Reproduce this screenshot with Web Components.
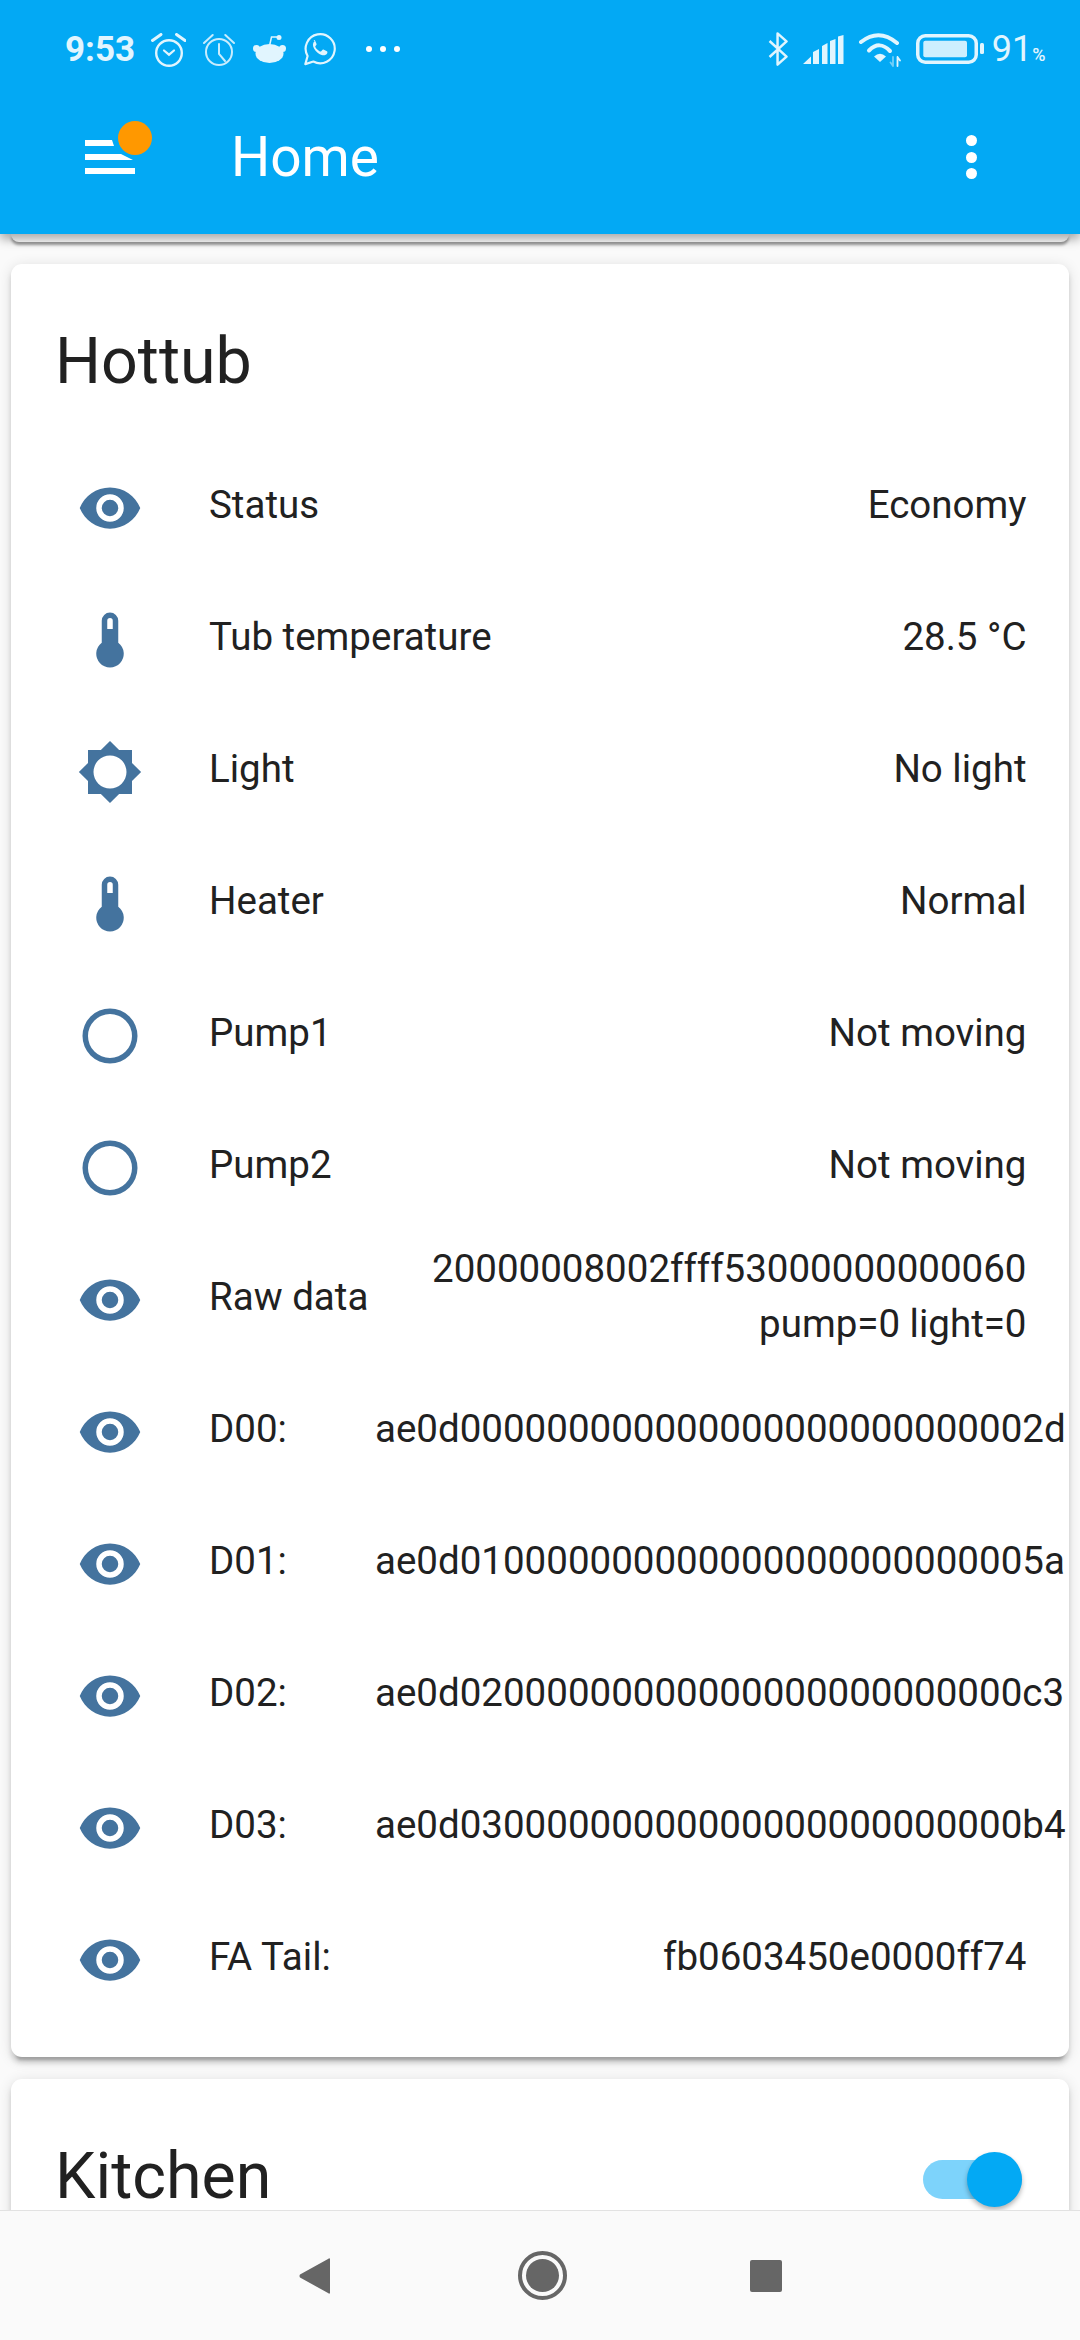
<!DOCTYPE html>
<html>
<head>
<meta charset="utf-8">
<style>
  html, body { margin: 0; height: 100%; }
  body { background: #fafafa; font-family: Roboto, sans-serif; color: #212121; overflow: hidden; }
  ha-app { height: 2340px; }
</style>
</head>
<body>
<ha-app>
  <entity-card title="Hottub">
    <entity-row icon="eye" label="Status">Economy</entity-row>
    <entity-row icon="thermometer" label="Tub temperature">28.5 °C</entity-row>
    <entity-row icon="sun" label="Light">No light</entity-row>
    <entity-row icon="thermometer" label="Heater">Normal</entity-row>
    <entity-row icon="circle" label="Pump1">Not moving</entity-row>
    <entity-row icon="circle" label="Pump2">Not moving</entity-row>
    <entity-row icon="eye" label="Raw data">20000008002ffff53000000000060 pump=0 light=0</entity-row>
    <entity-row icon="eye" label="D00:">ae0d000000000000000000000000002d</entity-row>
    <entity-row icon="eye" label="D01:">ae0d010000000000000000000000005a</entity-row>
    <entity-row icon="eye" label="D02:">ae0d02000000000000000000000000c3</entity-row>
    <entity-row icon="eye" label="D03:">ae0d03000000000000000000000000b4</entity-row>
    <entity-row icon="eye" label="FA Tail:">fb0603450e0000ff74</entity-row>
  </entity-card>
  <entity-card title="Kitchen" toggle></entity-card>
</ha-app>

<script>
const ICONS = {
  eye: 'M12,9A3,3 0 0,0 9,12A3,3 0 0,0 12,15A3,3 0 0,0 15,12A3,3 0 0,0 12,9M12,17A5,5 0 0,1 7,12A5,5 0 0,1 12,7A5,5 0 0,1 17,12A5,5 0 0,1 12,17M12,4.5C7,4.5 2.73,7.61 1,12C2.73,16.39 7,19.5 12,19.5C17,19.5 21.27,16.39 23,12C21.27,7.61 17,4.5 12,4.5Z',
  thermometer: 'M15 13V5A3 3 0 0 0 9 5V13A5 5 0 1 0 15 13M12 4A1 1 0 0 1 13 5V8H11V5A1 1 0 0 1 12 4Z',
  sun: 'M20 8.69V4H15.31L12 .69 8.69 4H4V8.69L.69 12 4 15.31V20H8.69L12 23.31 15.31 20H20V15.31L23.31 12 20 8.69ZM12 18A6 6 0 1 1 12 6 6 6 0 0 1 12 18Z',
  circle: 'M12,20A8,8 0 0,1 4,12A8,8 0 0,1 12,4A8,8 0 0,1 20,12A8,8 0 0,1 12,20M12,2A10,10 0 0,0 2,12A10,10 0 0,0 12,22A10,10 0 0,0 22,12A10,10 0 0,0 12,2Z'
};

class HaApp extends HTMLElement {
  constructor() {
    super();
    this.attachShadow({ mode: 'open' });
    this.shadowRoot.innerHTML = `
      <style>
        :host { display: flex; flex-direction: column; position: relative; }
        header { position: relative; z-index: 2; background: #03a9f4; height: 234px; flex: none;
                 box-shadow: 0 5px 10px rgba(0,0,0,.35); }
        main { flex: 1; min-height: 0; overflow: hidden; padding: 0 11px; display: flex; flex-direction: column; gap: 22px; }
        .stub { height: 8px; flex: none; background: #fff; border-radius: 0 0 11px 11px;
                box-shadow: 0 3px 3px rgba(0,0,0,.38); }
        nav-bar { flex: none; position: relative; z-index: 2; }
      </style>
      <header>
        <status-bar></status-bar>
        <top-toolbar>Home</top-toolbar>
      </header>
      <main>
        <div class="stub"></div>
        <slot></slot>
      </main>
      <nav-bar></nav-bar>
    `;
  }
}

class StatusBar extends HTMLElement {
  constructor() {
    super();
    this.attachShadow({ mode: 'open' });
    this.shadowRoot.innerHTML = `
      <style>
        :host { display: flex; align-items: center; height: 80px; padding: 18px 34.5px 0 65px; box-sizing: border-box;
                color: #e1f5fe; font-family: Roboto, sans-serif; }
        .time { font-size: 35px; font-weight: 700; width: 86px; flex: none; }
        svg { display: block; flex: none; }
        .spacer { flex: 1; }
        .pct { font-size: 36px; margin-left: 7px; }
        .pct small { font-size: 18px; font-weight: 500; }
      </style>
      <span class="time">9:53</span>
      <svg width="35" height="34" viewBox="0 0 35 34" fill="none" stroke="currentColor" stroke-width="2.4" stroke-linecap="round" style="margin-top:2px">
        <circle cx="18" cy="20" r="12.800"/><path d="M13 17.500l5 4.200 5-4.200" stroke-width="2.200"/><path d="M1.500 7.500l8.500-6M34 7.500l-8.500-6" stroke-width="3"/>
      </svg>
      <svg width="32" height="34" viewBox="0 0 32 34" fill="none" stroke="#c8ecfd" stroke-width="2" stroke-linecap="round" style="margin:2px 0 0 17px">
        <circle cx="16" cy="19" r="13"/><path d="M16 11v10l6 7"/><path d="M1 10L9.700 2M31 10L22.300 2"/>
      </svg>
      <svg width="33" height="28" viewBox="0 0 33 28" fill="currentColor" style="margin:0 0 0 18px">
        <ellipse cx="16.500" cy="18.500" rx="14" ry="9.500"/><circle cx="3.500" cy="13.500" r="3.500"/><circle cx="29.500" cy="13.500" r="3.500"/>
        <circle cx="26" cy="2.500" r="2.500"/><path d="M16.500 11L18.500 2H26" fill="none" stroke="currentColor" stroke-width="1.500"/>
      </svg>
      <svg width="33" height="34" viewBox="0 0 34 36" fill="none" stroke="currentColor" stroke-width="2.3" style="margin-left:17px">
        <path d="M2 34l2.400-8.600A15.400 15.400 0 1 1 10.500 31.300Z" stroke-linejoin="round"/>
        <path d="M11.800 9.800c-2 1.600-2.400 4.400-.6 7.600 2 3.400 4.600 5.800 8 7 2.600.8 5 0 6-2 .4-1 .2-1.600-.4-2l-3.600-1.800c-.6-.2-1 0-1.400.6l-1 1.200c-.4.4-.8.4-1.400.2-2-1-3.600-2.400-4.800-4.600-.2-.4-.2-.8.2-1.200l.8-1c.4-.4.4-.8.2-1.400l-1.400-3.200c-.4-.8-1-.8-1.600-.4Z" fill="currentColor" stroke="none"/>
      </svg>
      <svg width="34" height="8" viewBox="0 0 34 8" fill="#fff" style="margin-left:30px">
        <circle cx="3" cy="4" r="3"/><circle cx="17" cy="4" r="3"/><circle cx="31" cy="4" r="3"/>
      </svg>
      <div class="spacer"></div>
      <svg width="21" height="34" viewBox="0 0 22 36" fill="none" stroke="currentColor" stroke-width="2.600" stroke-linejoin="round">
        <path d="M1.500 9.500L19.500 26 10 34.500V1.500L19.500 10 1.500 26.500"/>
      </svg>
      <svg width="41" height="29" viewBox="0 0 41 29" fill="currentColor" style="margin-left:14px">
        <path d="M0 29L8 21.500V29ZM10 17L16 14V29H10ZM19 11L24.500 8V29H19ZM27 6L32.500 4V29H27ZM35 1.500L40.500 0V29H35Z"/>
      </svg>
      <svg width="44" height="36" viewBox="0 0 44 36" fill="none" stroke="currentColor" stroke-width="4" stroke-linecap="round" style="margin-left:14px">
        <path d="M3 11Q21 -3 39 12"/><path d="M11 19.500Q21.500 9 32 20"/>
        <path d="M16 25.500L22 31L28 25.500Q22 20 16 25.500Z" fill="currentColor" stroke="none"/>
        <path d="M39.500 26V35M39.500 26L42 29.500" stroke-width="1.800"/>
        <path d="M35 26V35M35 35L32.500 31.500" stroke-width="1.800" opacity=".5"/>
      </svg>
      <svg width="69" height="30" viewBox="0 0 69 30" fill="none" style="margin-left:14px">
        <rect x="1.750" y="1.750" width="58.500" height="26.500" rx="7.500" stroke="currentColor" stroke-width="3.500"/>
        <rect x="7.300" y="6.700" width="43.700" height="16.600" rx="2" fill="#cdeffe"/>
        <rect x="64" y="9" width="4" height="11" rx="1.500" fill="currentColor"/>
      </svg>
      <span class="pct">91<small>%</small></span>
    `;
  }
}

class TopToolbar extends HTMLElement {
  constructor() {
    super();
    this.attachShadow({ mode: 'open' });
    this.shadowRoot.innerHTML = `
      <style>
        :host { display: flex; align-items: center; height: 154px; padding-left: 85px; color: #fff;
                font-family: Roboto, sans-serif; font-size: 55px; }
        .menu { position: relative; width: 50px; height: 34px; flex: none; }
        .menu svg { display: block; }
        .dot { position: absolute; left: 33px; top: -19px; width: 34px; height: 34px; border-radius: 50%; background: #ff9800; }
        .title { margin-left: 96px; flex: 1; }
        .more { flex: none; margin-right: 103px; display: flex; flex-direction: column; gap: 5.5px; }
        .more i { display: block; width: 11px; height: 11px; border-radius: 50%; background: #fff; }
      </style>
      <div class="menu">
        <svg width="50" height="34" viewBox="0 0 50 34" fill="#fff">
          <path d="M0 0H27L29 6H0ZM0 14H36L48 20H0ZM0 28H50V34H0Z"/>
        </svg>
        <div class="dot"></div>
      </div>
      <div class="title"><slot></slot></div>
      <div class="more"><i></i><i></i><i></i></div>
    `;
  }
}

class EntityCard extends HTMLElement {
  constructor() {
    super();
    this.attachShadow({ mode: 'open' });
  }

  connectedCallback() {
    this.shadowRoot.innerHTML = `
      <style>
        :host { display: block; background: #fff; border-radius: 11px; padding-bottom: 46px; flex: none;
                box-shadow: 0 5.5px 5.5px rgba(0,0,0,.14), 0 2.75px 14px rgba(0,0,0,.12), 0 8px 3px -5.5px rgba(0,0,0,.2); }
        .head { display: flex; align-items: center; justify-content: space-between; height: 88px;
                padding: 53px 44px 44px; font-size: 64.5px; line-height: 88px; }
        .toggle { position: relative; width: 99px; height: 39px; border-radius: 20px; background: #7dd3fb; margin: 7px 3px 0 0; }
        .toggle i { position: absolute; right: 0; top: -8px; width: 55px; height: 55px; border-radius: 50%; background: #03a9f4;
                    box-shadow: 0 3px 5px rgba(0,0,0,.3); }
        .rows { display: flex; flex-direction: column; gap: 22px; padding: 0 42.5px 0 44px; }
      </style>
      <div class="head">
        <span>${this.getAttribute('title')}</span>
        ${this.hasAttribute('toggle') ? '<div class="toggle"><i></i></div>' : ''}
      </div>
      <div class="rows"><slot></slot></div>
    `;
  }
}

class EntityRow extends HTMLElement {
  constructor() {
    super();
    this.attachShadow({ mode: 'open' });
  }

  connectedCallback() {
    this.shadowRoot.innerHTML = `
      <style>
        :host { display: flex; align-items: center; height: 110px; font-size: 38.5px; line-height: 55px; color: #212121; }
        .icon { width: 110px; height: 66px; flex: none; display: flex; justify-content: center; margin-top: 7px; }
        svg { display: block; fill: #44739e; }
        .label { margin-left: 44px; white-space: nowrap; flex: none; }
        .value { margin-left: auto; max-width: 651.5px; flex: none; text-align: right; }
      </style>
      <div class="icon"><svg width="66" height="66" viewBox="0 0 24 24"><path d="${ICONS[this.getAttribute('icon')]}"/></svg></div>
      <div class="label">${this.getAttribute('label')}</div>
      <div class="value"><slot></slot></div>
    `;
  }
}

class NavBar extends HTMLElement {
  constructor() {
    super();
    this.attachShadow({ mode: 'open' });
    this.shadowRoot.innerHTML = `
      <style>
        :host { display: flex; justify-content: center; align-items: center; height: 130px; box-sizing: border-box;
                background: #fafafa; border-top: 1px solid #e2e2e2; }
        svg { display: block; fill: #666; }
        .b { margin-right: 188px; }
        .s { margin-left: 183px; }
      </style>
      <svg class="b" width="31" height="36" viewBox="0 0 31 36"><path d="M31 1.500V34.500Q31 36.500 29 35L1 19.500Q0 18 1 16.500L29 1Q31 -.5 31 1.500Z"/></svg>
      <svg width="49" height="49" viewBox="0 0 49 49"><circle cx="24.500" cy="24.500" r="22.500" fill="none" stroke="#666" stroke-width="4"/><circle cx="24.500" cy="24.500" r="16.500"/></svg>
      <svg class="s" width="32" height="32" viewBox="0 0 32 32"><rect width="32" height="32" rx="2"/></svg>
    `;
  }
}

customElements.define('status-bar', StatusBar);
customElements.define('top-toolbar', TopToolbar);
customElements.define('nav-bar', NavBar);
customElements.define('entity-row', EntityRow);
customElements.define('entity-card', EntityCard);
customElements.define('ha-app', HaApp);
</script>
</body>
</html>
